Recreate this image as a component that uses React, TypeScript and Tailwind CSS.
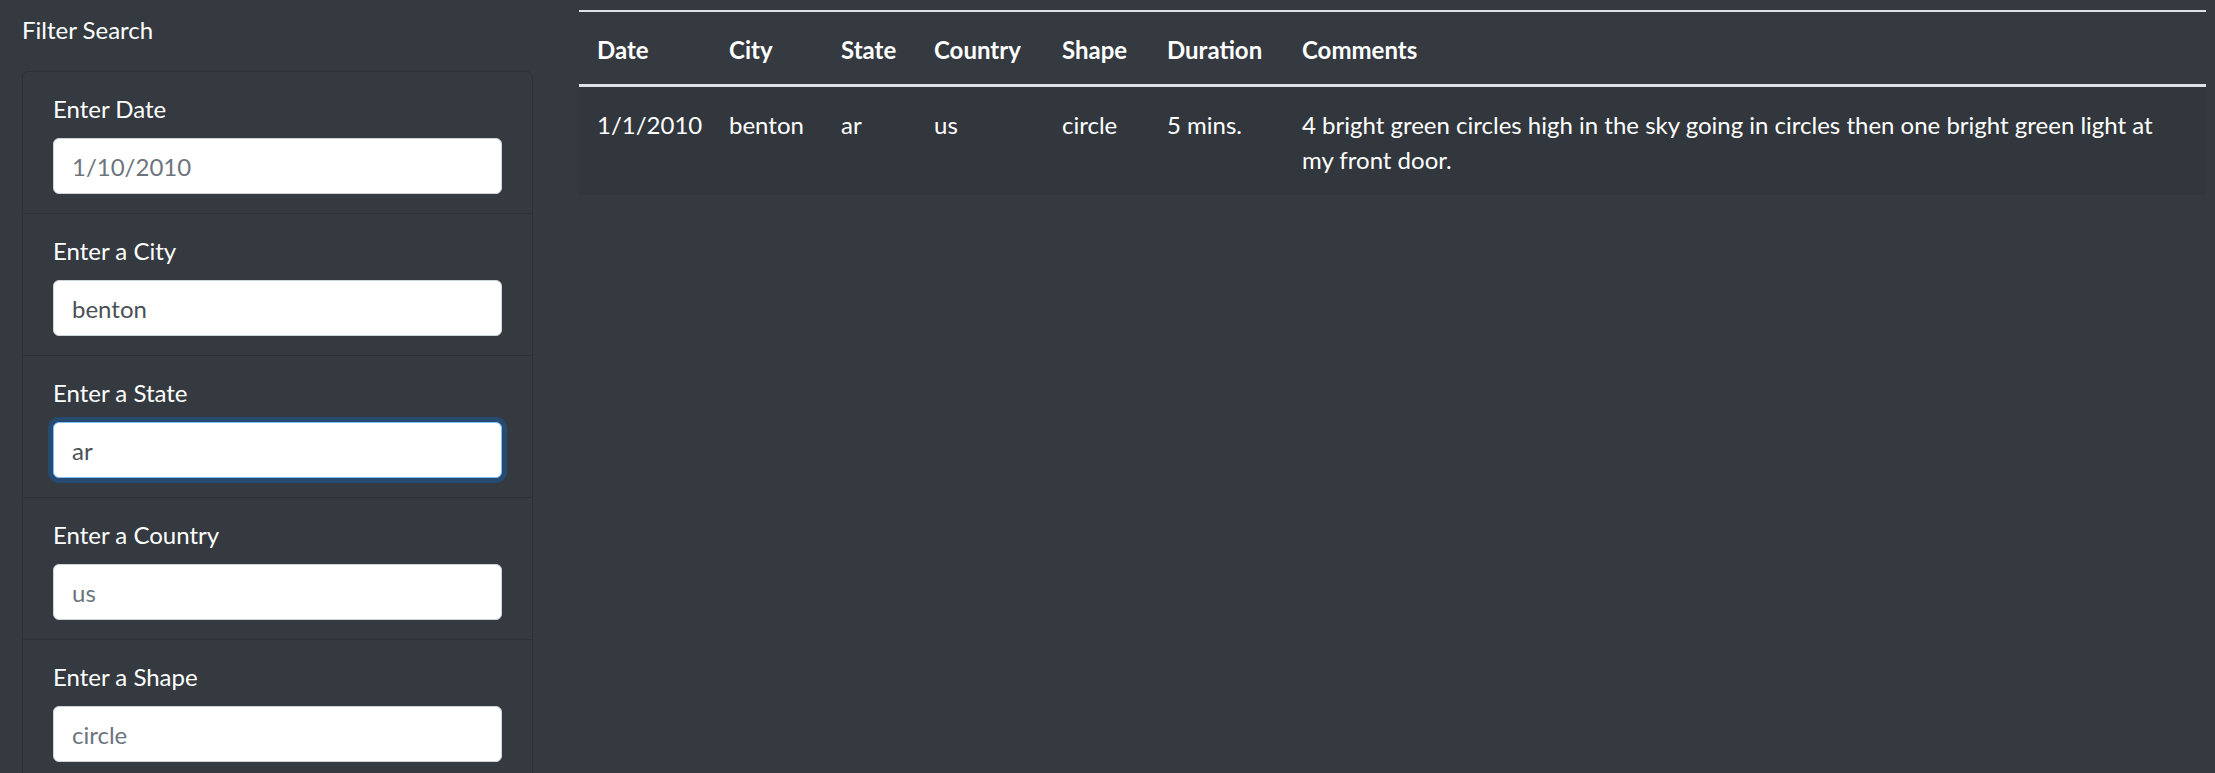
const filters = [
  { label: "Enter Date", value: "", placeholder: "1/10/2010" },
  { label: "Enter a City", value: "benton", placeholder: "" },
  { label: "Enter a State", value: "ar", placeholder: "", focused: true },
  { label: "Enter a Country", value: "", placeholder: "us" },
  { label: "Enter a Shape", value: "", placeholder: "circle" },
];

const sightings = [
  {
    date: "1/1/2010",
    city: "benton",
    state: "ar",
    country: "us",
    shape: "circle",
    duration: "5 mins.",
    comments:
      "4 bright green circles high in the sky going in circles then one bright green light at my front door.",
  },
];

function FilterItem({
  label,
  value,
  placeholder,
  focused,
  last,
}: {
  label: string;
  value: string;
  placeholder: string;
  focused?: boolean;
  last?: boolean;
}) {
  return (
    <li className={`px-[30px] pt-[19px] pb-[19px] ${last ? "" : "border-b border-[#2c3137]"}`}>
      <label className="block text-white">{label}</label>
      <input
        type="text"
        readOnly
        value={value}
        placeholder={placeholder}
        className={`mt-[12px] block h-[56px] w-full rounded-[6px] border bg-white px-[18px] text-[#495057] placeholder:text-[#6c757d] outline-none ${
          focused
            ? "border-[#80bdff] shadow-[0_0_0_5px_#274a70]"
            : "border-[#ced4da]"
        }`}
      />
    </li>
  );
}

export default function App() {
  return (
    <div
      className="flex min-h-screen bg-[#343a40] text-[24px] leading-[35px] text-white"
      style={{ fontFamily: "Lato, 'Liberation Sans', sans-serif" }}
    >
      <aside className="w-[555px] shrink-0 px-[22px] pt-[12px]">
        <p>Filter Search</p>
        <ul className="mt-[24px] rounded-[6px] border border-[#2c3137]">
          {filters.map((f, i) => (
            <FilterItem key={f.label} {...f} last={i === filters.length - 1} />
          ))}
        </ul>
      </aside>

      <main className="min-w-0 flex-1 pr-[9px] pl-[24px] pt-[10px]">
        <table className="w-full table-fixed border-collapse border-t-2 border-[#dee2e6] text-left">
          <colgroup>
            <col className="w-[132px]" />
            <col className="w-[112px]" />
            <col className="w-[93px]" />
            <col className="w-[128px]" />
            <col className="w-[105px]" />
            <col className="w-[135px]" />
            <col />
          </colgroup>
          <thead>
            <tr className="border-b-[3px] border-[#dee2e6]">
              {["Date", "City", "State", "Country", "Shape", "Duration", "Comments"].map((h) => (
                <th key={h} className="px-[18px] pt-[20px] pb-[17px] font-bold">
                  {h}
                </th>
              ))}
            </tr>
          </thead>
          <tbody>
            {sightings.map((s) => (
              <tr key={s.date + s.city} className="bg-[#31373d]">
                <td className="px-[18px] pt-[20px] pb-[18px] align-top">{s.date}</td>
                <td className="px-[18px] pt-[20px] pb-[18px] align-top">{s.city}</td>
                <td className="px-[18px] pt-[20px] pb-[18px] align-top">{s.state}</td>
                <td className="px-[18px] pt-[20px] pb-[18px] align-top">{s.country}</td>
                <td className="px-[18px] pt-[20px] pb-[18px] align-top">{s.shape}</td>
                <td className="px-[18px] pt-[20px] pb-[18px] align-top">{s.duration}</td>
                <td className="pr-[40px] pl-[18px] pt-[20px] pb-[18px] align-top">{s.comments}</td>
              </tr>
            ))}
          </tbody>
        </table>
      </main>
    </div>
  );
}
